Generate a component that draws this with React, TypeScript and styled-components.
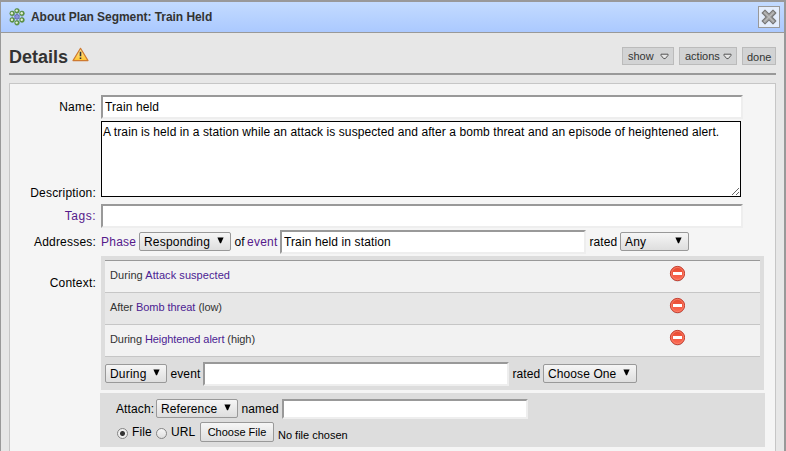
import React from 'react';
import styled, { createGlobalStyle } from 'styled-components';

const GlobalStyle = createGlobalStyle`
  * { box-sizing: border-box; }
  body { margin: 0; background: #e7e7e7; overflow: hidden; }
  body, input, textarea, button { font-family: "Liberation Sans", Arial, sans-serif; font-size: 12px; }
`;

const Window = styled.div`
  display: flex;
  flex-direction: column;
  width: 786px;
  height: 451px;
  overflow: hidden;
  border: solid #999;
  border-width: 2px 2px 0 1px;
  background: #e7e7e7;
  color: #000;
`;

const TitleBar = styled.header`
  display: flex;
  align-items: center;
  flex: none;
  height: 31px;
  padding: 0 4px 0 8px;
  border-bottom: 1px solid #999;
  background: linear-gradient(#c3dbff, #abc9ff);
`;

const WindowTitle = styled.h1`
  flex: 1;
  margin: 0 0 0 5px;
  font-size: 12px;
  line-height: 16px;
  letter-spacing: -0.05px;
  color: #333;
`;

const CloseButton = styled.button`
  display: flex;
  align-items: center;
  justify-content: center;
  width: 22px;
  height: 22px;
  padding: 0;
  border: 1px solid #999;
  background: #e4edfc;
`;

const Header = styled.div`
  display: flex;
  flex: none;
  height: 42px;
  margin: 0 8px;
  border-bottom: 2px solid #999;
`;

const Heading = styled.h2`
  margin: 13px 4px 0 0;
  width: 59px;
  font-size: 18px;
  line-height: 22px;
  color: #333;
  white-space: nowrap;
`;

const WarningSlot = styled.span`
  flex: 1;
  padding-top: 14px;
`;

const Actions = styled.nav`
  display: flex;
  gap: 5px;
  padding-top: 14px;
`;

const ActionButton = styled.button<{ $width: number; $drop?: number }>`
  display: flex;
  align-items: center;
  justify-content: space-between;
  width: ${(p) => p.$width}px;
  height: 18px;
  padding: ${(p) => p.$drop ?? 0}px 4px 0 ${(p) => (p.$drop ? 4 : 5)}px;
  border: 1px solid #bbb;
  background: #d2d3d4;
  color: #333;
  font-size: 11px;
  line-height: 14px;
  white-space: nowrap;
`;

const Panel = styled.main`
  flex: none;
  height: 400px;
  margin: 8px 8px 0;
  padding-top: 11px;
  border: 1px solid #c6c6c6;
  background: #f5f5f5;
`;

const FormRow = styled.div<{ $height: number; $gap?: number }>`
  display: flex;
  height: ${(p) => p.$height}px;
  margin-bottom: ${(p) => p.$gap ?? 2}px;
`;

const Label = styled.label<{ $top?: number; $link?: boolean; $spacing?: number }>`
  flex: none;
  width: 91px;
  padding: ${(p) => p.$top ?? 5}px 5px 0 0;
  line-height: 14px;
  text-align: right;
  white-space: nowrap;
  letter-spacing: ${(p) => p.$spacing ?? 0.2}px;
  color: ${(p) => (p.$link ? '#551a8b' : '#000')};
`;

const TextInput = styled.input<{ $width: number; $height?: number }>`
  flex: none;
  width: ${(p) => p.$width}px;
  height: ${(p) => p.$height ?? 24}px;
  margin: 0;
  padding: 1px 2px;
  border: 2px solid;
  border-color: #999 #eee #eee #999;
  border-radius: 0;
  background: #fff;
  color: #000;
  letter-spacing: 0.12px;
  outline: none;
`;

const DescriptionBox = styled.textarea`
  width: 640px;
  height: 76px;
  margin: 0;
  padding: 3px 1px;
  border: 1px solid #000;
  border-radius: 0;
  line-height: 14px;
  letter-spacing: 0.09px;
  white-space: nowrap;
  overflow: hidden;
  outline: none;
`;

const Word = styled.span<{ $width: number; $link?: boolean; $spacing?: number }>`
  flex: none;
  width: ${(p) => p.$width}px;
  line-height: 14px;
  white-space: nowrap;
  letter-spacing: ${(p) => p.$spacing ?? 0.12}px;
  color: ${(p) => (p.$link ? '#551a8b' : '#000')};
`;

const Picker = styled.button<{ $width: number; $spacing?: number }>`
  display: flex;
  flex: none;
  align-items: center;
  justify-content: space-between;
  width: ${(p) => p.$width}px;
  height: 19px;
  margin: 0 0 1px;
  padding: 0 6px 0 4px;
  border: 1px solid #999;
  border-radius: 2px;
  background: linear-gradient(#f6f6f6, #dedede);
  color: #000;
  line-height: 14px;
  white-space: nowrap;
  letter-spacing: ${(p) => p.$spacing ?? 0.2}px;
  svg { margin-bottom: 2px; }
`;

const FileButton = styled(Picker)`
  justify-content: center;
  height: 20px;
  padding: 0;
  font-size: 11px;
`;

const Inline = styled.div<{ $height: number; $indent?: number }>`
  display: flex;
  align-items: center;
  height: ${(p) => p.$height}px;
  padding-left: ${(p) => p.$indent ?? 0}px;
`;

const ContextBlock = styled.section`
  width: 663px;
  height: 134px;
  padding: 4px;
  background: #ddd;
`;

const EventList = styled.ul`
  margin: 0 0 5px;
  padding: 0;
  list-style: none;
  border-top: 1px solid #999;
`;

const EventRow = styled.li`
  display: flex;
  height: 32px;
  padding: 0 75px 0 5px;
  border-bottom: 1px solid #c6c6c6;
  background: #f2f2f2;
  color: #333;
  font-size: 11px;
  line-height: 28px;
  &:nth-child(even) { background: #e7e7e7; }
  svg { margin-top: 4px; }
`;

const EventText = styled.span<{ $spacing: number }>`
  flex: 1;
  letter-spacing: ${(p) => p.$spacing}px;
`;

const EventLink = styled.a`
  color: #4b2292;
`;

const AttachBlock = styled.section`
  width: 665px;
  height: 54px;
  margin-left: 90px;
  padding: 6px 0 0 16px;
  background: #ddd;
`;

const Radio = styled.span<{ $checked?: boolean }>`
  flex: none;
  width: 11px;
  height: 11px;
  margin: 3px 4px 0 0;
  border: 1px solid #858585;
  border-radius: 50%;
  background: ${(p) =>
    p.$checked
      ? 'radial-gradient(circle, #333 0 2px, #eee 3px)'
      : 'linear-gradient(#f6f6f6, #dedede)'};
`;

const FileStatus = styled.span`
  margin: 6px 0 0 4px;
  font-size: 11px;
  line-height: 14px;
`;

const Arrow = () => (
  <svg width="7" height="7" viewBox="0 0 7 7">
    <path d="M0.4 0.5h6.2L4 6.2h-1z" fill="#000" />
  </svg>
);

const MenuArrow = () => (
  <svg width="9" height="7" viewBox="0 0 9 7">
    <path d="M1 1.2h7v1.2L5.3 5.6H3.7L1 2.4z" fill="#e6e6e6" stroke="#555" />
  </svg>
);

const nodes: [number, number][] = [
  [8, 2.8],
  [13, 5.4],
  [13, 12],
  [8, 14.8],
  [3.2, 12],
  [3.2, 5.4],
];

const SegmentIcon = () => (
  <svg width="17" height="19" viewBox="0 0 17 19">
    <path d="M8 3v12M3.2 5.5L13 12M13 5.5L3.2 12M3.2 5.5V12M13 5.5V12" stroke="#8392bd" strokeWidth=".9" fill="none" />
    <circle cx="8" cy="8.8" r="2.3" fill="#8d95dd" stroke="#5663a6" strokeWidth=".8" />
    {nodes.map(([x, y]) => (
      <g key={`${x}-${y}`}>
        <circle cx={x} cy={y} r="2.4" fill="#5c9440" stroke="#4e823e" strokeWidth=".5" />
        <circle cx={x - 0.3} cy={y - 0.2} r="1.2" fill="#e2eddb" />
      </g>
    ))}
  </svg>
);

const CloseIcon = () => (
  <svg width="16" height="16" viewBox="0 0 16 16">
    <path d="M4 1.2L8 5.2l4-4L14.8 4l-4 4 4 4L12 14.8l-4-4-4 4L1.2 12l4-4-4-4z" fill="#a8a8a8" stroke="#777" strokeWidth="1.1" strokeLinejoin="round" />
    <path d="M3 3.2l10 9.6M13 3.2L3 12.8" stroke="#bbb" strokeWidth="1" />
  </svg>
);

const WarningIcon = () => (
  <svg width="17" height="16" viewBox="0 0 17 16">
    <defs>
      <linearGradient id="amber" x1="0" y1="0" x2="0" y2="1">
        <stop offset="0" stopColor="#ffe8a0" />
        <stop offset="1" stopColor="#ffc52e" />
      </linearGradient>
    </defs>
    <path d="M8.5 1.3L16 13.6H1z" fill="url(#amber)" stroke="#ce7a31" strokeWidth="1.2" strokeLinejoin="round" />
    <path d="M8.5 4.8v4.4M8.5 10.4v1.7" stroke="#333" strokeWidth="1.6" />
  </svg>
);

const RemoveIcon = () => (
  <svg width="16" height="17" viewBox="0 0 16 17">
    <defs>
      <linearGradient id="coral" x1="0" y1="0" x2="0" y2="1">
        <stop offset="0" stopColor="#e5482f" />
        <stop offset="1" stopColor="#ff6b56" />
      </linearGradient>
    </defs>
    <ellipse cx="8.5" cy="9" rx="7" ry="7.4" fill="#bbb" />
    <circle cx="8.5" cy="8.5" r="7.1" fill="url(#coral)" stroke="#c53a2c" strokeWidth="1" />
    <circle cx="8.5" cy="8.5" r="6.1" fill="none" stroke="#f98870" strokeWidth=".8" />
    <rect x="4" y="7" width="9" height="3" fill="#fff" />
  </svg>
);

const events = [
  { when: 'During', name: 'Attack suspected', level: '', spacing: 0.06 },
  { when: 'After', name: 'Bomb threat', level: ' (low)', spacing: -0.05 },
  { when: 'During', name: 'Heightened alert', level: ' (high)', spacing: -0.08 },
];

export default function App() {
  return (
    <>
      <GlobalStyle />
      <Window>
        <TitleBar>
          <SegmentIcon />
          <WindowTitle>About Plan Segment: Train Held</WindowTitle>
          <CloseButton aria-label="Close"><CloseIcon /></CloseButton>
        </TitleBar>
        <Header>
          <Heading>Details</Heading>
          <WarningSlot><WarningIcon /></WarningSlot>
          <Actions>
            <ActionButton $width={52}>show <MenuArrow /></ActionButton>
            <ActionButton $width={58}>actions <MenuArrow /></ActionButton>
            <ActionButton $width={34} $drop={2}>done</ActionButton>
          </Actions>
        </Header>
        <Panel>
          <FormRow $height={24}>
            <Label $spacing={0.3}>Name:</Label>
            <TextInput $width={642} defaultValue="Train held" />
          </FormRow>
          <FormRow $height={76} $gap={7}>
            <Label $top={65}>Description:</Label>
            <DescriptionBox
              spellCheck={false}
              defaultValue="A train is held in a station while an attack is suspected and after a bomb threat and an episode of heightened alert."
            />
          </FormRow>
          <FormRow $height={24}>
            <Label $link $spacing={0.5}>Tags:</Label>
            <TextInput $width={642} />
          </FormRow>
          <FormRow $height={24}>
            <Label>Addresses:</Label>
            <Inline $height={24}>
              <Word $width={38} $link $spacing={0.25}>Phase</Word>
              <Picker $width={92}>Responding <Arrow /></Picker>
              <Word $width={16}>&nbsp;of</Word>
              <Word $width={33} $link $spacing={0.25}>event</Word>
              <TextInput $width={306} defaultValue="Train held in station" />
              <Word $width={34}>&nbsp;rated</Word>
              <Picker $width={69}>Any <Arrow /></Picker>
            </Inline>
          </FormRow>
          <FormRow $height={134} $gap={3}>
            <Label $top={20}>Context:</Label>
            <ContextBlock>
              <EventList>
                {events.map((e) => (
                  <EventRow key={e.name}>
                    <EventText $spacing={e.spacing}>
                      {e.when} <EventLink>{e.name}</EventLink>{e.level}
                    </EventText>
                    <RemoveIcon />
                  </EventRow>
                ))}
              </EventList>
              <Inline $height={24}>
                <Picker $width={62}>During <Arrow /></Picker>
                <Word $width={36}>&nbsp;event</Word>
                <TextInput $width={306} />
                <Word $width={34}>&nbsp;rated</Word>
                <Picker $width={94} $spacing={0.1}>Choose One <Arrow /></Picker>
              </Inline>
            </ContextBlock>
          </FormRow>
          <AttachBlock>
            <Inline $height={20}>
              <Word $width={40}>Attach:</Word>
              <Picker $width={82} $spacing={0.1}>Reference <Arrow /></Picker>
              <Word $width={44}>&nbsp;named</Word>
              <TextInput $width={246} $height={20} />
            </Inline>
            <Inline $height={26} $indent={1}>
              <Radio $checked />
              <Word $width={24}>File</Word>
              <Radio />
              <Word $width={29}>URL</Word>
              <FileButton $width={74} $spacing={0}>Choose File</FileButton>
              <FileStatus>No file chosen</FileStatus>
            </Inline>
          </AttachBlock>
        </Panel>
      </Window>
    </>
  );
}
